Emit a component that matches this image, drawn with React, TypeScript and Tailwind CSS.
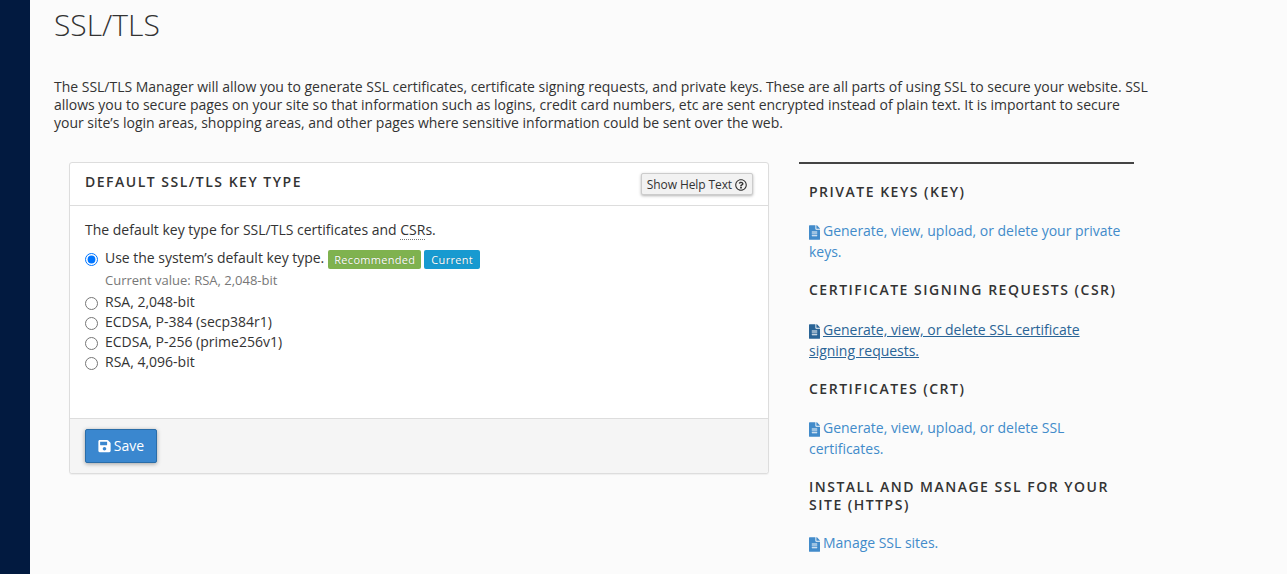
import React from "react";
import { FaFileAlt, FaSave, FaRegQuestionCircle } from "react-icons/fa";

const options = ["RSA, 2,048-bit", "ECDSA, P-384 (secp384r1)", "ECDSA, P-256 (prime256v1)", "RSA, 4,096-bit"];

function Radio({ checked }: { checked?: boolean }) {
  return (
    <input
      type="radio"
      name="keytype"
      defaultChecked={checked}
      className="m-0 mt-[2px] h-[13px] w-[13px] shrink-0 appearance-auto"
    />
  );
}

function SideLink({ text, className }: { text: string; className: string }) {
  return (
    <p className={"text-[14px] leading-[21px] tracking-[-0.02px] " + className}>
      <FaFileAlt className="mb-[-1px] mr-[3px] inline-block h-[15px] w-[11px]" />
      {text}
    </p>
  );
}

function SideHeading({ children }: { children: React.ReactNode }) {
  return (
    <h2 className="text-[14px] font-semibold uppercase leading-[18px] tracking-[1.5px] text-[#333]">{children}</h2>
  );
}

export default function App() {
  return (
    <div
      className="flex h-[574px] w-full overflow-hidden bg-[#fbfbfb] text-[#333]"
      style={{ fontFamily: '"Open Sans", sans-serif' }}
    >
      <aside className="w-[30px] shrink-0 bg-[#021a40]" />
      <main className="min-w-0 flex-1 pl-6">
        <h1 className="mt-[7px] text-[30px] font-light leading-[36px] text-[#333]">SSL/TLS</h1>
        <p className="mt-[35px] w-[1096px] text-[14px] leading-[18px] tracking-[-0.013px] text-[#333]">
          The SSL/TLS Manager will allow you to generate SSL certificates, certificate signing requests, and private
          keys. These are all parts of using SSL to secure your website. SSL allows you to secure pages on your site so
          that information such as logins, credit card numbers, etc are sent encrypted instead of plain text. It is
          important to secure your site’s login areas, shopping areas, and other pages where sensitive information could
          be sent over the web.
        </p>
        <div className="ml-[15px] mt-[30px] flex items-start">
          <section className="flex h-[312px] w-[700px] flex-col rounded-[3px] border border-[#ddd] bg-white shadow-[0_1px_1px_rgba(0,0,0,0.05)]">
            <header className="flex h-[43px] shrink-0 items-start justify-between border-b border-[#ddd] pl-[15px] pr-[15px]">
              <h2 className="mt-[10px] text-[14px] font-semibold uppercase leading-[18px] tracking-[1.5px] text-[#333]">
                Default SSL/TLS Key Type
              </h2>
              <button className="mt-[10px] flex h-[22px] items-center gap-[3px] rounded-[2px] border border-[#ccc] bg-[#f2f2f2] px-[5px] pt-[2px] text-[12px] leading-[18px] tracking-[-0.1px] text-[#333] shadow-[0_1px_3px_rgba(0,0,0,0.3)]">
                Show Help Text
                <FaRegQuestionCircle className="h-[12px] w-[12px]" />
              </button>
            </header>
            <div className="flex-1 px-[15px] pt-[14px] text-[14px] leading-[20px]">
              <p className="leading-[20px]">
                The default key type for SSL/TLS certificates and{" "}
                <abbr className="no-underline [border-bottom:1px_dotted_#777]" title="Certificate Signing Request">
                  CSR
                </abbr>
                s.
              </p>
              <div className="mt-[8px] flex h-[20px] items-center gap-[7px]">
                <Radio checked />
                <span className="tracking-[-0.02px]">Use the system’s default key type.</span>
                <span className="ml-[-3px] mt-[2px] rounded-[2px] bg-[#7fb24f] px-[6px] text-[11px] font-medium leading-[19px] tracking-[0.3px] text-white [text-shadow:0_0_1px_rgba(0,0,0,0.3)]">
                  Recommended
                </span>
                <span className="ml-[-4px] mt-[2px] rounded-[2px] bg-[#179ad0] px-[7px] text-[11px] font-medium leading-[19px] tracking-[0.3px] text-white [text-shadow:0_0_1px_rgba(0,0,0,0.3)]">
                  Current
                </span>
              </div>
              <p className="mb-[3px] ml-[20px] mt-[3px] text-[13px] leading-[18px] text-[#777]">
                Current value: RSA, 2,048-bit
              </p>
              {options.map((o) => (
                <label key={o} className="flex h-[20px] items-center gap-[7px]">
                  <Radio />
                  <span>{o}</span>
                </label>
              ))}
            </div>
            <footer className="h-[55px] shrink-0 rounded-b-[3px] border-t border-[#ddd] bg-[#f5f5f5] px-[15px] pt-[10px]">
              <button className="flex h-[34px] w-[72px] items-center justify-center gap-[3px] rounded-[2px] border border-[#2a6da8] bg-[#3a87cf] text-[14px] leading-[20px] text-white shadow-[0_1px_4px_rgba(0,0,0,0.35)]">
                <FaSave className="h-[14px] w-[13px]" />
                Save
              </button>
            </footer>
          </section>
          <aside className="ml-[30px] w-[335px] border-t-2 border-[#444] pl-[10px] pr-[10px] pt-[19px]">
            <SideHeading>Private Keys (KEY)</SideHeading>
            <SideLink className="mt-[19px] text-[#428bca]" text="Generate, view, upload, or delete your private keys." />
            <div className="mt-[19px]">
              <SideHeading>Certificate Signing Requests (CSR)</SideHeading>
            </div>
            <SideLink
              className="mt-[20px] text-[#2a6496] underline"
              text="Generate, view, or delete SSL certificate signing requests."
            />
            <div className="mt-[19px]">
              <SideHeading>Certificates (CRT)</SideHeading>
            </div>
            <SideLink className="mt-[19px] text-[#428bca]" text="Generate, view, upload, or delete SSL certificates." />
            <div className="mt-[19px]">
              <SideHeading>Install and Manage SSL for your site (HTTPS)</SideHeading>
            </div>
            <SideLink className="mt-[18px] text-[#428bca]" text="Manage SSL sites." />
          </aside>
        </div>
      </main>
    </div>
  );
}
